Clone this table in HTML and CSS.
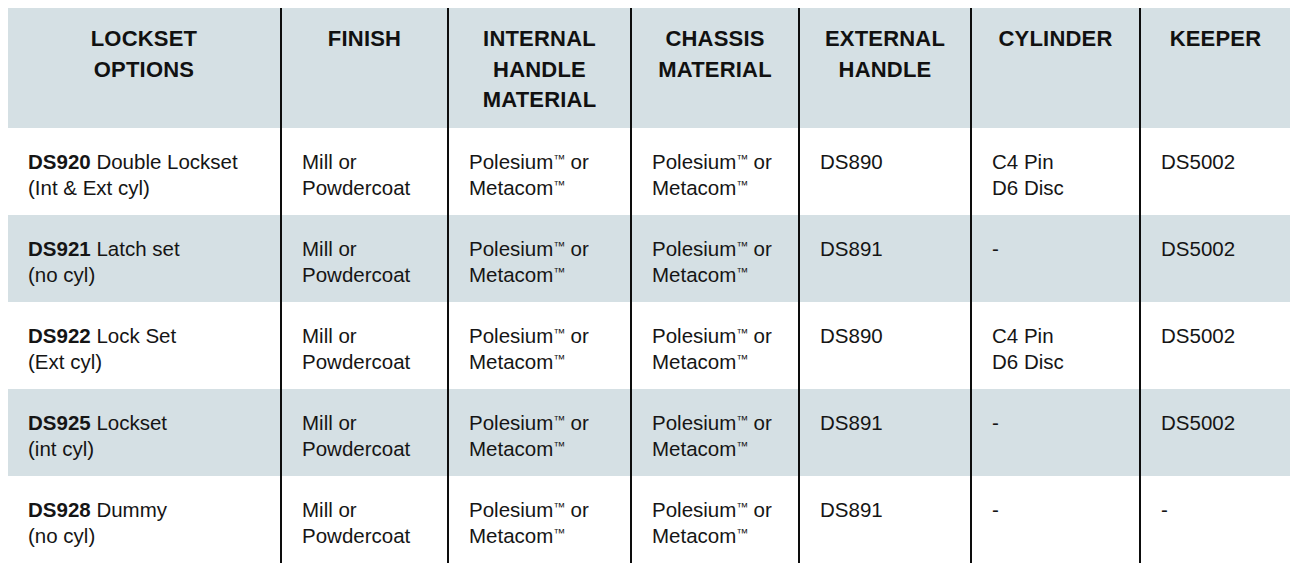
FILE: index.html
```html
<!DOCTYPE html>
<html lang="en">
<head>
<meta charset="utf-8">
<title>Lockset options</title>
<link rel="stylesheet" href="styles.css">
</head>
<body>
<div class="table">
  <div class="row head">
    <div class="cell">LOCKSET<br>OPTIONS</div>
    <div class="cell">FINISH</div>
    <div class="cell">INTERNAL<br>HANDLE<br>MATERIAL</div>
    <div class="cell">CHASSIS<br>MATERIAL</div>
    <div class="cell">EXTERNAL<br>HANDLE</div>
    <div class="cell">CYLINDER</div>
    <div class="cell">KEEPER</div>
  </div>
  <div class="row">
    <div class="cell"><b>DS920</b> Double Lockset<br>(Int &amp; Ext cyl)</div>
    <div class="cell">Mill or<br>Powdercoat</div>
    <div class="cell">Polesium<span class="tm">™</span> or<br>Metacom<span class="tm">™</span></div>
    <div class="cell">Polesium<span class="tm">™</span> or<br>Metacom<span class="tm">™</span></div>
    <div class="cell">DS890</div>
    <div class="cell">C4 Pin<br>D6 Disc</div>
    <div class="cell">DS5002</div>
  </div>
  <div class="row alt">
    <div class="cell"><b>DS921</b> Latch set<br>(no cyl)</div>
    <div class="cell">Mill or<br>Powdercoat</div>
    <div class="cell">Polesium<span class="tm">™</span> or<br>Metacom<span class="tm">™</span></div>
    <div class="cell">Polesium<span class="tm">™</span> or<br>Metacom<span class="tm">™</span></div>
    <div class="cell">DS891</div>
    <div class="cell">-</div>
    <div class="cell">DS5002</div>
  </div>
  <div class="row">
    <div class="cell"><b>DS922</b> Lock Set<br>(Ext cyl)</div>
    <div class="cell">Mill or<br>Powdercoat</div>
    <div class="cell">Polesium<span class="tm">™</span> or<br>Metacom<span class="tm">™</span></div>
    <div class="cell">Polesium<span class="tm">™</span> or<br>Metacom<span class="tm">™</span></div>
    <div class="cell">DS890</div>
    <div class="cell">C4 Pin<br>D6 Disc</div>
    <div class="cell">DS5002</div>
  </div>
  <div class="row alt">
    <div class="cell"><b>DS925</b> Lockset<br>(int cyl)</div>
    <div class="cell">Mill or<br>Powdercoat</div>
    <div class="cell">Polesium<span class="tm">™</span> or<br>Metacom<span class="tm">™</span></div>
    <div class="cell">Polesium<span class="tm">™</span> or<br>Metacom<span class="tm">™</span></div>
    <div class="cell">DS891</div>
    <div class="cell">-</div>
    <div class="cell">DS5002</div>
  </div>
  <div class="row">
    <div class="cell"><b>DS928</b> Dummy<br>(no cyl)</div>
    <div class="cell">Mill or<br>Powdercoat</div>
    <div class="cell">Polesium<span class="tm">™</span> or<br>Metacom<span class="tm">™</span></div>
    <div class="cell">Polesium<span class="tm">™</span> or<br>Metacom<span class="tm">™</span></div>
    <div class="cell">DS891</div>
    <div class="cell">-</div>
    <div class="cell">-</div>
  </div>
</div>
</body>
</html>
```

FILE: styles.css
```css
html, body {
  background: #ffffff;
}
body {
  margin: 8px;
  font-family: "Liberation Sans", Arial, sans-serif;
  color: #151515;
}
.table {
  width: 1282px;
  display: flex;
  flex-direction: column;
}
.row {
  display: grid;
  grid-template-columns: 272px 167px 183px 168px 172px 169px 151px;
  height: 87px;
}
.row.alt,
.row.head {
  background: #d5e0e4;
}
.row.head {
  height: 120px;
}
.cell {
  padding: 21px 8px 0 20px;
  font-size: 20.5px;
  line-height: 26px;
  white-space: nowrap;
}
.cell + .cell {
  border-left: 2px solid #0d0d0d;
}
.cell b {
  font-weight: 700;
}
.head .cell {
  padding: 16px 4px 0 4px;
  font-size: 22px;
  line-height: 30.5px;
  font-weight: 700;
  letter-spacing: 0.2px;
  text-align: center;
  color: #111;
}
.tm {
  font-size: 12px;
  vertical-align: 6px;
  line-height: 0;
  letter-spacing: -0.5px;
}
```
